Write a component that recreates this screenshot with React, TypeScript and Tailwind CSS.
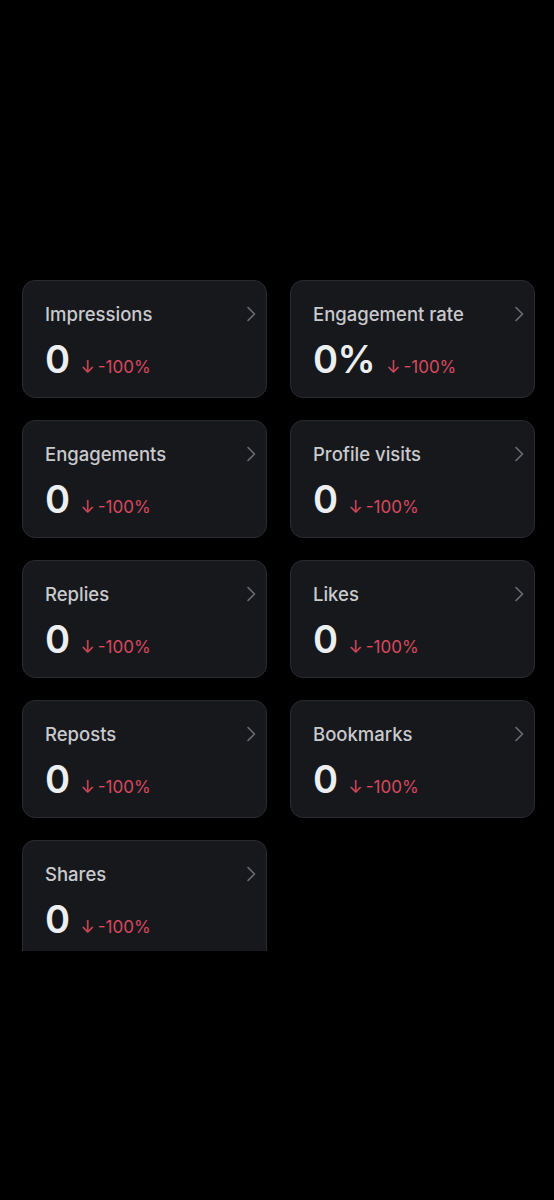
type Metric = {
  label: string;
  value: string;
  change: string;
};

const metrics: Metric[] = [
  { label: "Impressions", value: "0", change: "-100%" },
  { label: "Engagement rate", value: "0%", change: "-100%" },
  { label: "Engagements", value: "0", change: "-100%" },
  { label: "Profile visits", value: "0", change: "-100%" },
  { label: "Replies", value: "0", change: "-100%" },
  { label: "Likes", value: "0", change: "-100%" },
  { label: "Reposts", value: "0", change: "-100%" },
  { label: "Bookmarks", value: "0", change: "-100%" },
  { label: "Shares", value: "0", change: "-100%" },
];

function Chevron() {
  return (
    <svg width="10" height="16" viewBox="0 0 10 16" fill="none" className="mt-[4px] shrink-0">
      <path d="M2 1.5 L8.5 8 L2 14.5" stroke="#6b6e74" strokeWidth="1.6" strokeLinecap="round" strokeLinejoin="round" />
    </svg>
  );
}

function MetricCard({ m, cut }: { m: Metric; cut?: boolean }) {
  return (
    <div
      className={
        cut
          ? "h-[111px] rounded-t-[13px] border border-b-0 border-[#2a2b31] bg-[#17181c] pl-[22px] pr-[10px] pt-[21px]"
          : "h-[118px] rounded-[13px] border border-[#2a2b31] bg-[#17181c] pl-[22px] pr-[10px] pt-[21px]"
      }
    >
      <div className="flex items-start justify-between">
        <span className="text-[18.5px] leading-[24px] font-medium text-[#c9cacd]">{m.label}</span>
        <Chevron />
      </div>
      <div className="mt-[11px] flex items-baseline">
        <span className="text-[38px] leading-[44px] font-semibold tracking-[-0.5px] text-[#eceef0]">{m.value}</span>
        <span className="ml-[11px] text-[17px] leading-[24px] text-[#d8495e]">
          ↓<span className="ml-[3px]">{m.change}</span>
        </span>
      </div>
    </div>
  );
}

export default function App() {
  return (
    <div
      className="h-[1200px] w-full overflow-hidden bg-black"
      style={{ fontFamily: "Inter, 'Noto Sans', sans-serif" }}
    >
      <div className="grid grid-cols-[245px_245px] gap-x-[23px] gap-y-[22px] pl-[22px] pt-[280px]">
        {metrics.map((m, i) => (
          <MetricCard key={m.label} m={m} cut={i === metrics.length - 1} />
        ))}
      </div>
    </div>
  );
}
